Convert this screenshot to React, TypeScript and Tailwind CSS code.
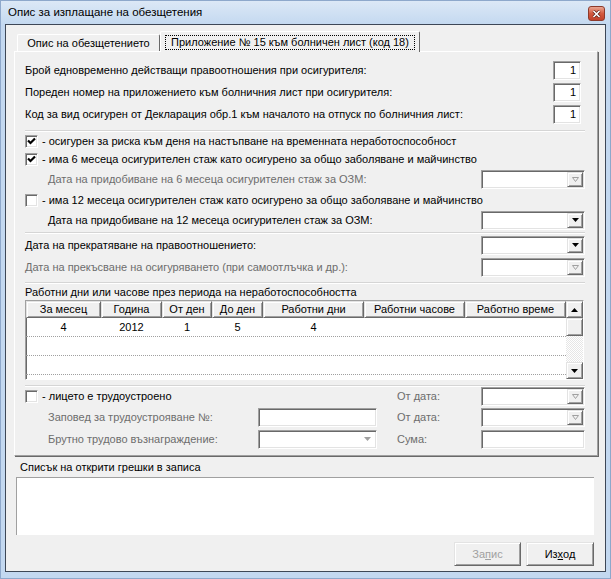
import React from 'react'

const sunken =
  'bg-white border border-t-[#a0a0a0] border-l-[#a0a0a0] border-r-white border-b-white shadow-[inset_1px_1px_0_#696969,inset_-1px_-1px_0_#e3e3e3]'
const raised =
  'bg-[#f0f0f0] border border-t-[#e3e3e3] border-l-[#e3e3e3] border-r-[#696969] border-b-[#696969] shadow-[inset_1px_1px_0_#ffffff,inset_-1px_-1px_0_#a0a0a0]'

const grayText = 'text-[#6d6d6d]'

function DownArrow({ disabled }: { disabled?: boolean }) {
  if (disabled) {
    return (
      <svg width="7" height="5" viewBox="0 0 7 5">
        <polygon points="0.5,0.5 6.5,0.5 3.5,4.5" fill="none" stroke="#a0a0a0" strokeWidth="1" />
      </svg>
    )
  }
  return (
    <svg width="7" height="4" viewBox="0 0 7 4">
      <polygon points="0,0 7,0 3.5,4" fill="#000" />
    </svg>
  )
}

function UpArrow() {
  return (
    <svg width="7" height="4" viewBox="0 0 7 4">
      <polygon points="0,4 7,4 3.5,0" fill="#000" />
    </svg>
  )
}

function Combo({ disabled, className = '' }: { disabled?: boolean; className?: string }) {
  return (
    <div className={`${sunken} h-[19px] flex justify-end p-[1px] ${className}`}>
      <div className={`${raised} w-[16px] h-full flex items-center justify-center`}>
        <DownArrow disabled={disabled} />
      </div>
    </div>
  )
}

function Checkbox({ checked }: { checked?: boolean }) {
  return (
    <div className={`${sunken} w-[13px] h-[13px] shrink-0 flex items-center justify-center`}>
      {checked && (
        <svg width="9" height="9" viewBox="0 0 9 9">
          <path d="M1 3.5 L3.5 6 L8 1.5" fill="none" stroke="#000" strokeWidth="2.2" />
        </svg>
      )}
    </div>
  )
}

function Separator({ className = '' }: { className?: string }) {
  return <div className={`h-[2px] border-t border-t-[#d5d5d5] border-b border-b-white ${className}`} />
}

function NumBox({ value }: { value: string }) {
  return (
    <div className={`${sunken} w-[28px] h-[19px] mr-[4px] flex items-center justify-end pr-[4px] leading-none`}>
      {value}
    </div>
  )
}

const columns = ['За месец', 'Година', 'От ден', 'До ден', 'Работни дни', 'Работни часове', 'Работно време']
const rows = [['4', '2012', '1', '5', '4', '', ''], ['', '', '', '', '', '', ''], ['', '', '', '', '', '', ''], ['', '', '', '', '', '', '']]

export default function App() {
  return (
    <div className="w-[611px] h-[579px] flex flex-col bg-[#c3d8f0] border border-[#8ea8cb] font-['Liberation_Sans',Arial,sans-serif] text-[11px] text-black overflow-hidden select-none">
      {/* title bar */}
      <div className="h-[23px] shrink-0 flex items-center justify-between pl-[7px] pr-[5px] bg-gradient-to-b from-[#dce8f6] to-[#c4d9f0]">
        <span className="leading-none mt-[1px] text-[11.5px]">Опис за изплащане на обезщетения</span>
        <div className="w-[17px] h-[15px] mt-[2px] rounded-[3px] border border-[#8d3a2b] bg-gradient-to-b from-[#e9a592] via-[#d35a40] to-[#c2412a] flex items-center justify-center">
          <svg width="9" height="8" viewBox="0 0 9 8">
            <path d="M1.5 1 L7.5 7 M7.5 1 L1.5 7" stroke="#5a1e14" strokeWidth="3" />
            <path d="M1.5 1 L7.5 7 M7.5 1 L1.5 7" stroke="#ffffff" strokeWidth="1.6" />
          </svg>
        </div>
      </div>

      {/* client area */}
      <div className="mx-[4px] mb-[6px] flex-1 bg-[#f0f0f0] border border-[#3d4756] flex flex-col">
        {/* tabs */}
        <div className="ml-[8px] mt-[6px] h-[20px] flex items-end relative z-10">
          <div className="ml-[3px] w-[143px] h-[17px] border-l border-t border-l-white border-t-white border-r border-r-[#696969] rounded-t-[2px] flex items-center justify-center pt-[1px]">
            Опис на обезщетението
          </div>
          <div className="w-[260px] h-[21px] -mb-[1px] bg-[#f0f0f0] border-l border-t border-l-white border-t-white border-r border-r-[#696969] rounded-t-[2px] px-[4px] pt-[3px] pb-[2px]">
            <div className="h-[15px] border border-dotted border-black flex items-center justify-center whitespace-nowrap">
              Приложение № 15 към болничен лист (код 18)
            </div>
          </div>
        </div>

        {/* tab panel */}
        <div className="ml-[8px] w-[584px] h-[405px] border border-t-white border-l-white border-r-[#a0a0a0] border-b-[#a0a0a0] shadow-[1px_1px_0_#696969] pl-[10px] pr-[12px] pt-[7px] flex flex-col">
          <div className="h-[22px] flex items-center justify-between">
            <span>Брой едновременно действащи правоотношения при осигурителя:</span>
            <NumBox value="1" />
          </div>
          <div className="h-[22px] flex items-center justify-between">
            <span>Пореден номер на приложението към болничния лист при осигурителя:</span>
            <NumBox value="1" />
          </div>
          <div className="h-[22px] flex items-center justify-between">
            <span>Код за вид осигурен от Декларация обр.1 към началото на отпуск по болничния лист:</span>
            <NumBox value="1" />
          </div>

          <Separator className="mt-[5px]" />

          <div className="h-[18px] flex items-center gap-[4px]">
            <Checkbox checked />
            <span>- осигурен за риска към деня на настъпване на временната неработоспособност</span>
          </div>
          <div className="h-[18px] flex items-center gap-[4px]">
            <Checkbox checked />
            <span>- има 6 месеца осигурителен стаж като осигурено за общо заболяване и майчинство</span>
          </div>
          <div className="h-[22px] flex items-center justify-between pl-[23px]">
            <span className={grayText}>Дата на придобиване на 6 месеца осигурителен стаж за ОЗМ:</span>
            <Combo disabled className="w-[104px]" />
          </div>
          <div className="h-[20px] flex items-center gap-[4px]">
            <Checkbox />
            <span>- има 12 месеца осигурителен стаж като осигурено за общо заболяване и майчинство</span>
          </div>
          <div className="h-[20px] flex items-center justify-between pl-[23px]">
            <span>Дата на придобиване на 12 месеца осигурителен стаж за ОЗМ:</span>
            <Combo className="w-[104px]" />
          </div>

          <Separator className="mt-[2px]" />

          <div className="h-[22px] flex items-center justify-between">
            <span>Дата на прекратяване на правоотношението:</span>
            <Combo className="w-[104px]" />
          </div>
          <div className="h-[23px] flex items-center justify-between">
            <span className={grayText}>Дата на прекъсване на осигуряването (при самоотлъчка и др.):</span>
            <Combo disabled className="w-[104px]" />
          </div>

          <Separator className="mt-[3px]" />

          <div className="h-[16px] flex items-center">Работни дни или часове през периода на неработоспособността</div>

          {/* table */}
          <div className="w-[559px] h-[80px] bg-white border border-t-[#a0a0a0] border-l-[#a0a0a0] border-r-white border-b-white shadow-[inset_1px_1px_0_#696969] flex overflow-hidden">
            <div className="w-[540px] flex flex-col">
              <div className="grid grid-cols-[75px_61px_50px_51px_101px_101px_101px] h-[17px] shrink-0">
                {columns.map((c) => (
                  <div key={c} className={`${raised} flex items-center justify-center leading-none`}>
                    {c}
                  </div>
                ))}
              </div>
              {rows.map((r, i) => (
                <div
                  key={i}
                  className="grid grid-cols-[75px_61px_50px_51px_101px_101px_101px] h-[19px] shrink-0 border-b border-dotted border-b-[#a0a0a0]"
                >
                  {r.map((v, j) => (
                    <div key={j} className="flex items-center justify-center leading-none">
                      {v}
                    </div>
                  ))}
                </div>
              ))}
            </div>
            <div className="w-[17px] flex flex-col">
              <div className={`${raised} h-[17px] shrink-0 flex items-center justify-center`}>
                <UpArrow />
              </div>
              <div className={`${raised} h-[18px] shrink-0`} />
              <div className="flex-1 bg-[repeating-conic-gradient(#ffffff_0_25%,#e6e6e6_0_50%)] bg-[length:2px_2px]" />
              <div className={`${raised} h-[17px] shrink-0 flex items-center justify-center`}>
                <DownArrow />
              </div>
            </div>
          </div>

          <Separator className="mt-[5px]" />

          <div className="h-[19px] flex items-center">
            <div className="w-[352px] flex items-center gap-[4px]">
              <Checkbox />
              <span>- лицето е трудоустроено</span>
            </div>
            <div className="w-[20px]" />
            <span className={`${grayText} w-[84px]`}>От дата:</span>
            <Combo disabled className="w-[104px]" />
          </div>
          <div className="h-[22px] flex items-center">
            <span className={`${grayText} w-[233px] pl-[23px]`}>Заповед за трудоустрояване №:</span>
            <div className={`${sunken} w-[119px] h-[19px]`} />
            <div className="w-[20px]" />
            <span className={`${grayText} w-[84px]`}>От дата:</span>
            <Combo disabled className="w-[104px]" />
          </div>
          <div className="h-[22px] flex items-center">
            <span className={`${grayText} w-[233px] pl-[23px]`}>Брутно трудово възнаграждение:</span>
            <div className={`${sunken} w-[119px] h-[19px] flex items-center justify-end pr-[5px]`}>
              <svg width="7" height="4" viewBox="0 0 7 4">
                <polygon points="0,0 7,0 3.5,4" fill="#a0a0a0" />
              </svg>
            </div>
            <div className="w-[20px]" />
            <span className={`${grayText} w-[84px]`}>Сума:</span>
            <div className={`${sunken} w-[104px] h-[19px]`} />
          </div>
        </div>

        {/* errors list */}
        <div className="mt-[1px] h-[20px] pl-[14px] flex items-center">Списък на открити грешки в записа</div>
        <div className="ml-[10px] w-[578px] h-[58px] bg-white border-t border-l border-[#a0a0a0]" />

        <div className="mt-[7px] h-[24px] flex justify-end gap-[5px] pr-[11px]">
          <div className={`${raised} w-[67px] h-full flex items-center justify-center text-[#a0a0a0]`}>
            За<span className="underline">п</span>ис
          </div>
          <div className={`${raised} w-[68px] h-full flex items-center justify-center`}>
            Из<span className="underline">х</span>од
          </div>
        </div>
      </div>
    </div>
  )
}
